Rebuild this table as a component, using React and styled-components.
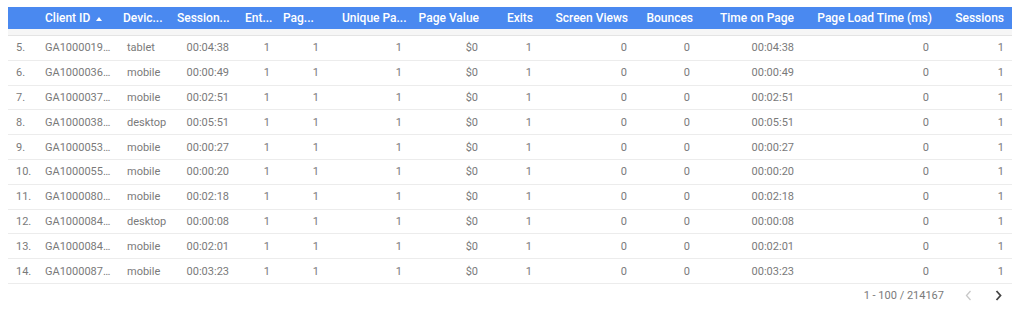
import React from "react";
import styled, { createGlobalStyle } from "styled-components";

const GlobalStyle = createGlobalStyle`
  html, body {
    margin: 0;
    padding: 0;
    background: #ffffff;
  }
  body {
    font-family: Roboto, "Liberation Sans", Arial, sans-serif;
  }
`;

const COLS = "32px 78px 54px 65px 40px 49px 84px 75px 54px 95px 64px 102px 137px 1fr";

const Page = styled.div`
  padding: 7px 0 0 8px;
  width: 1004px;
`;

const HeadRow = styled.div`
  display: grid;
  grid-template-columns: ${COLS};
  height: 22px;
  background: #4a89f0;
  align-items: center;
`;

const HeadCell = styled.div`
  min-width: 0;
  display: flex;
  align-items: center;
  justify-content: ${(p) => (p.$right ? "flex-end" : "flex-start")};
  gap: 6px;
  padding: 0 ${(p) => p.$pr ?? 6}px 0 ${(p) => p.$pl ?? 5}px;
  font-size: 12px;
  font-weight: 500;
  color: #ffffff;
  white-space: nowrap;
`;

const SortIcon = styled.svg`
  width: 6px;
  height: 4px;
  flex: none;
  margin-top: 1px;
`;

const HeadGap = styled.div`
  height: 6px;
  background: #f6f6f6;
  border-bottom: 1px solid #e4e4e4;
`;

const Row = styled.div`
  display: grid;
  grid-template-columns: ${COLS};
  height: 23.8px;
  align-items: center;
  border-bottom: 1px solid #ececec;
`;

const Cell = styled.div`
  font-size: 11px;
  color: #7a7a7a;
  white-space: nowrap;
  overflow: hidden;
  text-align: ${(p) => (p.$right ? "right" : "left")};
  padding: ${(p) =>
    p.$right ? `0 ${p.$pr || 6}px 0 0` : `0 0 0 ${p.$pl || 5}px`};
`;

const Pager = styled.div`
  display: flex;
  justify-content: flex-end;
  align-items: center;
  height: 24px;
`;

const PagerText = styled.span`
  font-size: 11px;
  color: #7a7a7a;
  margin-right: 12px;
`;

const PagerButton = styled.button`
  width: 24px;
  height: 24px;
  border: none;
  background: transparent;
  padding: 0;
  margin-left: ${(p) => (p.$gap ? "6px" : "0")};
  margin-right: ${(p) => (p.$gap ? "2px" : "0")};
  display: flex;
  align-items: center;
  justify-content: center;
  color: ${(p) => (p.$disabled ? "#c8c8c8" : "#444444")};
`;

const Chevron = ({ dir }) => (
  <svg width="7" height="11" viewBox="0 0 7 11">
    <polyline
      points={dir === "left" ? "5.5,1 1.5,5.5 5.5,10" : "1.5,1 5.5,5.5 1.5,10"}
      fill="none"
      stroke="currentColor"
      strokeWidth={dir === "left" ? 1.3 : 1.8}
    />
  </svg>
);

const headers = [
  { label: "" },
  { label: "Client ID", sort: true },
  { label: "Devic..." },
  { label: "Session...", pl: 5 },
  { label: "Ent...", pl: 8 },
  { label: "Pag...", pl: 6 },
  { label: "Unique Pa...", pl: 16 },
  { label: "Page Value", right: true },
  { label: "Exits", right: true },
  { label: "Screen Views", right: true },
  { label: "Bounces", right: true, pr: 5 },
  { label: "Time on Page", right: true },
  { label: "Page Load Time (ms)", right: true, pr: 5 },
  { label: "Sessions", right: true, pr: 8 },
];

const rows = [
  ["5.", "GA1000019…", "tablet", "00:04:38"],
  ["6.", "GA1000036…", "mobile", "00:00:49"],
  ["7.", "GA1000037…", "mobile", "00:02:51"],
  ["8.", "GA1000038…", "desktop", "00:05:51"],
  ["9.", "GA1000053…", "mobile", "00:00:27"],
  ["10.", "GA1000055…", "mobile", "00:00:20"],
  ["11.", "GA1000080…", "mobile", "00:02:18"],
  ["12.", "GA1000084…", "desktop", "00:00:08"],
  ["13.", "GA1000084…", "mobile", "00:02:01"],
  ["14.", "GA1000087…", "mobile", "00:03:23"],
];

export default function App() {
  return (
    <>
      <GlobalStyle />
      <Page>
        <HeadRow>
          {headers.map((h, i) => (
            <HeadCell key={i} $right={h.right} $pl={h.pl} $pr={h.pr}>
              {h.label}
              {h.sort && (
                <SortIcon viewBox="0 0 6 4">
                  <polygon points="0,4 3,0 6,4" fill="#ffffff" />
                </SortIcon>
              )}
            </HeadCell>
          ))}
        </HeadRow>
        <HeadGap />
        {rows.map(([idx, id, device, dur]) => (
          <Row key={idx}>
            <Cell $pl={8}>{idx}</Cell>
            <Cell>{id}</Cell>
            <Cell $pl={9}>{device}</Cell>
            <Cell $right $pr={8}>{dur}</Cell>
            <Cell $right $pr={7}>1</Cell>
            <Cell $right $pr={7}>1</Cell>
            <Cell $right $pr={8}>1</Cell>
            <Cell $right $pr={7}>$0</Cell>
            <Cell $right $pr={7}>1</Cell>
            <Cell $right $pr={7}>0</Cell>
            <Cell $right $pr={8}>0</Cell>
            <Cell $right $pr={6}>{dur}</Cell>
            <Cell $right $pr={8}>0</Cell>
            <Cell $right $pr={8}>1</Cell>
          </Row>
        ))}
        <Pager>
          <PagerText>1 - 100 / 214167</PagerText>
          <PagerButton $disabled aria-label="Previous page">
            <Chevron dir="left" />
          </PagerButton>
          <PagerButton $gap aria-label="Next page">
            <Chevron dir="right" />
          </PagerButton>
        </Pager>
      </Page>
    </>
  );
}
